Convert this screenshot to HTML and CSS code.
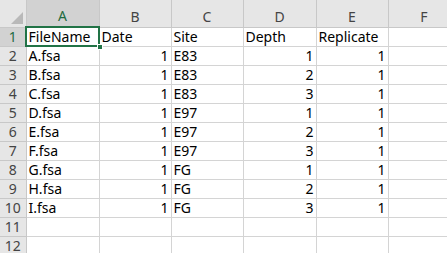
FILE: index.html
```html
<!DOCTYPE html>
<html lang="en">
<head>
    <meta charset="UTF-8">
    <title>Sheet1</title>
    <link rel="stylesheet" href="styles.css">
</head>
<body>
    <table class="sheet">
        <colgroup>
            <col class="c-row"><col class="c-a"><col class="c-b"><col class="c-c"><col class="c-d"><col class="c-e"><col class="c-f">
        </colgroup>
        <thead>
            <tr>
                <th class="corner"><span class="corner-tri"></span></th>
                <th class="col-head active">A</th>
                <th class="col-head">B</th>
                <th class="col-head">C</th>
                <th class="col-head">D</th>
                <th class="col-head">E</th>
                <th class="col-head">F</th>
            </tr>
        </thead>
        <tbody>
            <tr><th class="row-head active">1</th><td class="selected">FileName<span class="handle"></span></td><td>Date</td><td>Site</td><td>Depth</td><td>Replicate</td><td></td></tr>
            <tr><th class="row-head">2</th><td>A.fsa</td><td class="num">1</td><td>E83</td><td class="num">1</td><td class="num">1</td><td></td></tr>
            <tr><th class="row-head">3</th><td>B.fsa</td><td class="num">1</td><td>E83</td><td class="num">2</td><td class="num">1</td><td></td></tr>
            <tr><th class="row-head">4</th><td>C.fsa</td><td class="num">1</td><td>E83</td><td class="num">3</td><td class="num">1</td><td></td></tr>
            <tr><th class="row-head">5</th><td>D.fsa</td><td class="num">1</td><td>E97</td><td class="num">1</td><td class="num">1</td><td></td></tr>
            <tr><th class="row-head">6</th><td>E.fsa</td><td class="num">1</td><td>E97</td><td class="num">2</td><td class="num">1</td><td></td></tr>
            <tr><th class="row-head">7</th><td>F.fsa</td><td class="num">1</td><td>E97</td><td class="num">3</td><td class="num">1</td><td></td></tr>
            <tr><th class="row-head">8</th><td>G.fsa</td><td class="num">1</td><td>FG</td><td class="num">1</td><td class="num">1</td><td></td></tr>
            <tr><th class="row-head">9</th><td>H.fsa</td><td class="num">1</td><td>FG</td><td class="num">2</td><td class="num">1</td><td></td></tr>
            <tr><th class="row-head">10</th><td>I.fsa</td><td class="num">1</td><td>FG</td><td class="num">3</td><td class="num">1</td><td></td></tr>
            <tr><th class="row-head">11</th><td></td><td></td><td></td><td></td><td></td><td></td></tr>
            <tr><th class="row-head">12</th><td></td><td></td><td></td><td></td><td></td><td></td></tr>
        </tbody>
    </table>
</body>
</html>
```

FILE: styles.css
```css
* {
    margin: 0;
    padding: 0;
    box-sizing: border-box;
}
body {
    background: #fff;
    font-family: 'Noto Sans', 'Noto Sans CJK SC', sans-serif;
    overflow: hidden;
}
.sheet {
    border-collapse: collapse;
    table-layout: fixed;
    width: 460px;
    font-size: 14px;
    color: #000;
}
.c-row { width: 26px; }
.c-a { width: 73px; }
.c-b { width: 72px; }
.c-c { width: 72px; }
.c-d { width: 73px; }
.c-e { width: 72px; }
.c-f { width: 72px; }
.sheet th,
.sheet td {
    height: 19px;
    border: 1px solid #d4d4d4;
    white-space: nowrap;
    overflow: visible;
    line-height: 17px;
    padding: 0 2px;
}
.sheet thead th {
    height: 27px;
    background: #e6e6e6;
    border-color: #c8c8c8;
    border-top: none;
    font-weight: normal;
    color: #444;
    vertical-align: bottom;
    padding-bottom: 2px;
}
.sheet thead th.corner {
    border-left: none;
    position: relative;
}
.corner-tri {
    position: absolute;
    right: 3px;
    bottom: 3px;
    width: 0;
    height: 0;
    border-left: 12px solid transparent;
    border-bottom: 12px solid #b9b9b9;
}
.sheet thead th.active {
    background: #d2d2d2;
    color: #1e6b41;
    border-bottom: 2px solid #217346;
}
.row-head {
    background: #e6e6e6;
    border-color: #c8c8c8 !important;
    border-left: none !important;
    font-weight: normal;
    color: #444;
    text-align: center;
}
.row-head.active {
    background: #d2d2d2;
    color: #1e6b41;
}
.sheet td {
    text-align: left;
}
.sheet td.num {
    text-align: right;
}
.sheet td.selected {
    position: relative;
    outline: 2px solid #217346;
    outline-offset: -1px;
}
.handle {
    position: absolute;
    right: -4px;
    bottom: -4px;
    width: 6px;
    height: 6px;
    background: #217346;
    border: 1px solid #fff;
}
```
